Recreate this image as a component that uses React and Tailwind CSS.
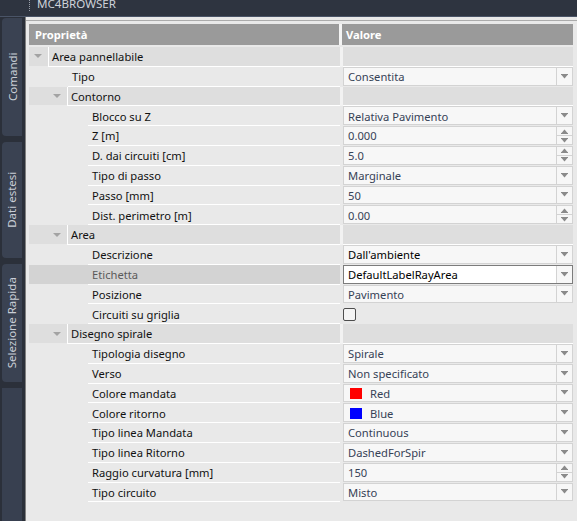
const FONT = "font-['Noto_Sans','Liberation_Sans',sans-serif]";

const rows = [
  { cat: true, lvl: 0, label: 'Area pannellabile' },
  { lvl: 1, label: 'Tipo', value: 'Consentita', kind: 'drop' },
  { cat: true, lvl: 1, label: 'Contorno' },
  { lvl: 2, label: 'Blocco su Z', value: 'Relativa Pavimento', kind: 'drop' },
  { lvl: 2, label: 'Z [m]', value: '0.000', kind: 'spin' },
  { lvl: 2, label: 'D. dai circuiti [cm]', value: '5.0', kind: 'spin' },
  { lvl: 2, label: 'Tipo di passo', value: 'Marginale', kind: 'drop' },
  { lvl: 2, label: 'Passo [mm]', value: '50', kind: 'drop' },
  { lvl: 2, label: 'Dist. perimetro [m]', value: '0.00', kind: 'spin' },
  { cat: true, lvl: 1, label: 'Area' },
  { lvl: 2, label: 'Descrizione', value: "Dall'ambiente", kind: 'drop', dark: true },
  { lvl: 2, label: 'Etichetta', value: 'DefaultLabelRayArea', kind: 'drop', selected: true },
  { lvl: 2, label: 'Posizione', value: 'Pavimento', kind: 'drop' },
  { lvl: 2, label: 'Circuiti su griglia', kind: 'check' },
  { cat: true, lvl: 1, label: 'Disegno spirale' },
  { lvl: 2, label: 'Tipologia disegno', value: 'Spirale', kind: 'drop' },
  { lvl: 2, label: 'Verso', value: 'Non specificato', kind: 'drop' },
  { lvl: 2, label: 'Colore mandata', value: 'Red', kind: 'drop', swatch: 'bg-[#ff0000]' },
  { lvl: 2, label: 'Colore ritorno', value: 'Blue', kind: 'drop', swatch: 'bg-[#0000ff]' },
  { lvl: 2, label: 'Tipo linea Mandata', value: 'Continuous', kind: 'drop' },
  { lvl: 2, label: 'Tipo linea Ritorno', value: 'DashedForSpir', kind: 'drop' },
  { lvl: 2, label: 'Raggio curvatura [mm]', value: '150', kind: 'spin' },
  { lvl: 2, label: 'Tipo circuito', value: 'Misto', kind: 'drop' },
];

function DownArrow() {
  return (
    <svg width="7" height="5" viewBox="0 0 7 5">
      <rect x="0" y="0" width="7" height="1" fill="#8a8a8a" />
      <polygon points="0.5,1 6.5,1 3.5,4.5" fill="#8a8a8a" />
    </svg>
  );
}

function UpArrow() {
  return (
    <svg width="7" height="5" viewBox="0 0 7 5">
      <polygon points="3.5,0.5 6.5,4 0.5,4" fill="#8a8a8a" />
      <rect x="0" y="4" width="7" height="1" fill="#8a8a8a" />
    </svg>
  );
}

function Expander() {
  return (
    <svg width="8" height="4" viewBox="0 0 8 4">
      <polygon points="0,0 8,0 4,4" fill="#a3a3a3" />
    </svg>
  );
}

function Value({ row }) {
  if (row.cat) return <div className="w-[230px] h-full bg-[#dedede] border-b border-white" />;
  if (row.kind === 'check') {
    return (
      <div className="w-[230px] h-full flex items-center">
        <div className="w-[13px] h-[13px] border border-[#4d4d4d] rounded-[2px] bg-[#f4f4f4]" />
      </div>
    );
  }
  const box = row.selected ? 'border-[#7c7c7c] bg-white text-black' : row.dark ? 'border-[#d3d3d3] bg-[#f7f7f7] text-black' : 'border-[#d3d3d3] bg-[#f7f7f7] text-[#364256]';
  return (
    <div className={`w-[230px] h-[calc(100%-1px)] border flex ${box}`}>
      <div className="flex-1 flex items-center pl-[4px] pt-[1px] overflow-hidden whitespace-nowrap">
        {row.swatch && <span className={`w-[12px] h-[11px] ml-[2px] mr-[8px] ${row.swatch}`} />}
        {row.value}
      </div>
      {row.kind === 'drop' ? (
        <div className="w-[16px] border-l border-[#d3d3d3] flex items-center justify-center bg-[#f7f7f7]">
          <DownArrow />
        </div>
      ) : (
        <div className="w-[16px] flex flex-col">
          <div className="flex-1 border-l border-[#d3d3d3] flex items-center justify-center">
            <UpArrow />
          </div>
          <div className="flex-1 border-l border-t border-[#d3d3d3] flex items-center justify-center">
            <DownArrow />
          </div>
        </div>
      )}
    </div>
  );
}

function Row({ row }) {
  if (row.cat) {
    const w = row.lvl === 0 ? 'w-[19px]' : 'w-[38px]';
    return (
      <div className="flex h-[19.8px]">
        <div className={`${w} h-[calc(100%-1px)] bg-[#dedede] flex items-center justify-end pr-[6px] shrink-0`}>
          <Expander />
        </div>
        <div className="w-px bg-white" />
        <div className="flex-1 h-full bg-[#dedede] border-b border-white flex items-center pl-[3px] pt-[1px] text-[#111]">
          {row.label}
        </div>
        <div className="w-[3px] bg-[#f2f2f2] h-full" />
        <Value row={row} />
      </div>
    );
  }
  const w = row.lvl === 1 ? 'w-[39px]' : 'w-[59px]';
  return (
    <div className="flex h-[19.8px]">
      <div className={`${w} shrink-0 h-[calc(100%-1px)] ${row.selected ? 'bg-[#d3d3d3] mr-[2px]' : ''}`} />
      <div className={`flex-1 h-full border-b border-white flex items-center pl-[4px] pt-[1px] whitespace-nowrap overflow-hidden ${row.selected ? 'bg-[#d3d3d3] text-[#5a5a5a] -ml-[2px]' : 'text-[#111]'}`}>
        {row.label}
      </div>
      <div className="w-[3px]" />
      <Value row={row} />
    </div>
  );
}

function Tab({ label, h }) {
  return (
    <div className={`w-[20px] ml-[2px] ${h} bg-[#3a4252] rounded-l-[4px] flex items-center justify-center`}>
      <span className="-rotate-90 whitespace-nowrap text-[11.5px] text-[#c9ced6]">{label}</span>
    </div>
  );
}

export default function App() {
  return (
    <div className={`w-[577px] h-[521px] flex flex-col bg-[#2b303a] overflow-hidden text-[11.2px] leading-none ${FONT}`}>
      <div className="h-[17px] shrink-0 bg-[#2e3440] border-b border-[#4a5467] flex items-start">
        <div className="ml-[29px] w-px h-[11px] border-l border-dotted border-[#9aa0aa]" />
        <span className="ml-[7px] -mt-[3px] text-[11.6px] leading-[14px] text-[#cdd2da]">MC4BROWSER</span>
      </div>
      <div className="flex flex-1 min-h-0">
        <div className="w-[25px] shrink-0 flex flex-col pt-[1px] gap-[6px]">
          <Tab label="Comandi" h="h-[118px]" />
          <Tab label="Dati estesi" h="h-[116px]" />
          <Tab label="Selezione Rapida" h="h-[118px]" />
          <div className="flex-1 w-[20px] ml-[2px] bg-[#384050]" />
        </div>
        <div className="flex-1 bg-[#e9e9e9] border-l border-[#808080] pt-[3px] pl-[3px] pr-[4px]">
          <div className="h-px bg-[#ababab] -ml-[3px] -mr-[4px]" />
          <div className="mt-[3px] h-[21px] flex">
            <div className="w-[310px] bg-[#9a9a9a] flex items-center pl-[6px] pt-[1px] font-bold text-white">Proprietà</div>
            <div className="w-[3px] bg-[#f4f4f4]" />
            <div className="flex-1 bg-[#9a9a9a] flex items-center pl-[4px] pt-[1px] font-bold text-white">Valore</div>
          </div>
          <div className="mt-[2px]">
            {rows.map((r, i) => (
              <Row key={i} row={r} />
            ))}
          </div>
        </div>
      </div>
    </div>
  );
}
